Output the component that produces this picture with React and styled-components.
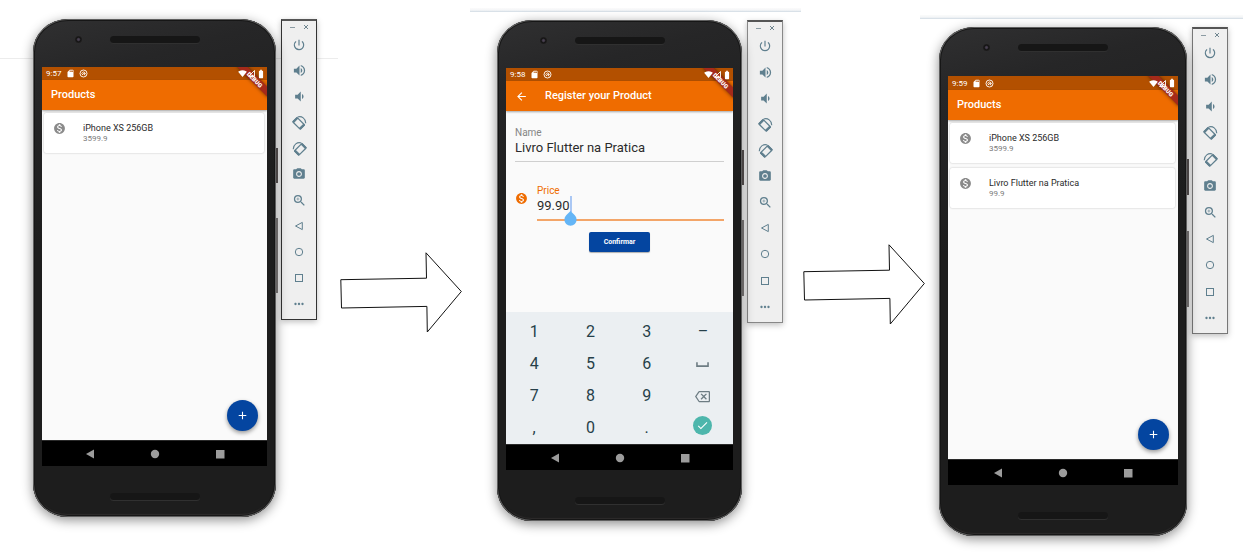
import React from "react";
import styled, { createGlobalStyle, css } from "styled-components";
import {
  MdPowerSettingsNew,
  MdVolumeUp,
  MdVolumeDown,
  MdCameraAlt,
  MdZoomIn,
  MdMoreHoriz,
  MdSdCard,
  MdSignalWifi4Bar,
  MdBatteryFull,
  MdMonetizationOn,
  MdArrowBack,
  MdAdd,
  MdCheck,
  MdOutlineBackspace,
  MdSpaceBar,
} from "react-icons/md";

const GlobalStyle = createGlobalStyle`
  * { box-sizing: border-box; }
  body {
    margin: 0;
    background: #fff;
    font-family: Roboto, "Liberation Sans", sans-serif;
  }
  button, input { font-family: inherit; }
  button { padding: 0; border: 0; background: none; cursor: pointer; }
  svg { display: block; flex: none; }
`;

/* ---------- page ---------- */

const Storyboard = styled.main`
  display: grid;
  grid-template-columns: 340fr minmax(0, 130fr) 333fr minmax(0, 117fr) 325fr;
  align-items: start;
  min-height: 100vh;
`;

const Shot = styled.section`
  position: relative;
  display: flex;
  gap: 5px;
  padding: ${(p) => p.$padding};

  &::before {
    content: "";
    position: absolute;
    z-index: -1;
    left: 0;
    right: 2px;
    top: ${(p) => p.$ruleTop}px;
    height: ${(p) => (p.$plainRule ? 1 : 4)}px;
    background: ${(p) =>
      p.$plainRule ? "#ececec" : "linear-gradient(#fbfbfb 0, #f3f5f7 60%, #d3dce4 75%, #dfe6ec)"};
  }
`;

const StepArrow = styled.svg`
  position: relative;
  z-index: 1;
  width: 122px;
  height: 81px;
  margin-top: ${(p) => p.$top}px;
`;

/* ---------- phone body ---------- */

const PhoneBody = styled.article`
  position: relative;
  flex: 1;
  min-width: 0;
  aspect-ratio: ${(p) => p.$ratio};
  display: flex;
  flex-direction: column;
  padding: 0 9px;
  border-radius: 35px / 33px;
  background: linear-gradient(165deg, #303031 0, #262627 12%, #1d1d1d 40%, #1d1d1d 100%);
  box-shadow:
    inset 0 0 0 1px #606060,
    inset 0 0 0 2px #161616,
    inset 0 -3px 1px #2e2c2c,
    0 3px 12px rgba(0, 0, 0, 0.45);
`;

const SideKey = styled.span`
  position: absolute;
  z-index: -1;
  right: -2px;
  width: 3px;
  top: ${(p) => p.$top}%;
  height: ${(p) => p.$length}%;
  background: ${(p) => p.$tone};
`;

const Bezel = styled.div`
  display: grid;
  grid-template-columns: 1fr 90px 1fr;
  align-items: start;
  flex: none;
  height: ${(p) => p.$height}px;
  padding-top: ${(p) => p.$inset}px;
`;

const Speaker = styled.span`
  grid-column: 2;
  height: 7px;
  border-radius: 4px;
  background:
    radial-gradient(circle, #080808 30%, transparent 50%) 0 0 / 2px 2px,
    #161616;
  box-shadow: 0 1px 0 #303030;
`;

const Lens = styled.span`
  justify-self: end;
  width: 7px;
  height: 7px;
  margin-right: 28px;
  border-radius: 50%;
  background: radial-gradient(circle, #4b4253 15%, #151515 45%, #2a2627);
`;

const Screen = styled.div`
  position: relative;
  flex: 1;
  min-height: 0;
  display: flex;
  flex-direction: column;
  overflow: hidden;
  background: #fafafa;
`;

const StatusBar = styled.div`
  display: flex;
  align-items: center;
  flex: none;
  gap: 4px;
  height: ${(p) => (p.$large ? 14 : 13)}px;
  padding: 0 1px 0 4px;
  background: #b35000;
  color: #fff;
  font-size: 8px;
  line-height: 13px;
`;

const Clock = styled.time`
  margin-right: 1px;
`;

const StatusEnd = styled.span`
  position: relative;
  z-index: 3;
  display: flex;
  align-items: center;
  margin-left: auto;
`;

const DebugRibbon = styled.span`
  position: absolute;
  z-index: 2;
  top: 9px;
  right: -10px;
  width: 44px;
  height: 7px;
  background: #a52a1a;
  box-shadow: 0 0 4px rgba(0, 0, 0, 0.55);
  color: #fff;
  font-size: 6px;
  font-weight: 900;
  line-height: 7px;
  text-align: center;
  transform: rotate(45deg);
`;

const AppBar = styled.header`
  position: relative;
  display: flex;
  align-items: center;
  flex: none;
  gap: 17px;
  height: 30px;
  padding: 0 9px;
  background: #ef6c00;
  box-shadow: 0 1px 2px rgba(0, 0, 0, 0.35);
  color: #fff;
`;

const BarTitle = styled.h1`
  margin: 0;
  font-size: 11px;
  font-weight: 500;
  line-height: 14px;
`;

const BackButton = styled.button`
  display: flex;
  color: #fff;
`;

const NavBar = styled.nav`
  display: flex;
  align-items: center;
  justify-content: center;
  flex: none;
  gap: 55px;
  height: 26px;
  border-top: 1px solid #2a2a2a;
  background: #000;
`;

const NavButton = styled.button`
  display: flex;
`;

/* ---------- product list ---------- */

const ListBody = styled.div`
  position: relative;
  flex: 1;
`;

const ProductList = styled.ul`
  display: flex;
  flex-direction: column;
  gap: 5px;
  margin: 0;
  padding: 3px;
  padding-left: 2px;
  list-style: none;
`;

const ProductCard = styled.li`
  display: flex;
  gap: 17px;
  height: 40px;
  padding: 9px;
  border-radius: 2px;
  background: #fff;
  box-shadow: 0 0 2px rgba(0, 0, 0, 0.25);
  color: #8a8a8a;
`;

const ProductText = styled.div`
  display: flex;
  flex-direction: column;
`;

const ProductName = styled.span`
  color: #2a2a2a;
  font-size: 9px;
  line-height: 12px;
`;

const ProductPrice = styled.span`
  color: #7b7b7b;
  font-size: 8px;
  line-height: 10px;
`;

const AddButton = styled.button`
  position: absolute;
  right: 9px;
  bottom: 9px;
  display: flex;
  align-items: center;
  justify-content: center;
  width: 31px;
  height: 31px;
  border-radius: 50%;
  background: #0445a0;
  box-shadow: 0 2px 4px rgba(0, 0, 0, 0.4);
  color: #fff;
`;

/* ---------- register form ---------- */

const Form = styled.form`
  flex: 1;
  display: flex;
  flex-direction: column;
  padding: 15px 9px 0;
`;

const Field = styled.div`
  position: relative;
  flex: 1;
  min-width: 0;
  display: flex;
  flex-direction: column;
  color: ${(p) => (p.$active ? "#ef6c00" : "#858585")};
  border-bottom: ${(p) => (p.$active ? "2px solid #f3a568" : "1px solid #cfcfcf")};
`;

const FieldLabel = styled.label`
  font-size: 10px;
  line-height: 13px;
`;

const FieldInput = styled.input`
  width: 100%;
  height: 22px;
  padding: 0 0 6px;
  border: 0;
  outline: 0;
  background: none;
  color: #2b2b2b;
  font-size: 13px;
  line-height: 16px;
`;

const FieldRow = styled.div`
  display: flex;
  gap: 9px;
  ${(p) =>
    p.$spaced &&
    css`
      margin: 22px 0 11px;
    `}
`;

const FieldIcon = styled.span`
  padding-top: 8px;
  color: #ef6c00;
`;

const CaretHandle = styled.svg`
  position: absolute;
  left: 27px;
  top: 12px;
`;

const SubmitButton = styled.button`
  align-self: center;
  width: 61px;
  height: 20px;
  border-radius: 2px;
  background: #0445a0;
  box-shadow: 0 1px 1px rgba(0, 0, 0, 0.3);
  color: #fff;
  font-size: 7px;
  font-weight: 700;
`;

const Keypad = styled.div`
  display: grid;
  grid-template-columns: repeat(4, 1fr);
  grid-auto-rows: 32px;
  flex: none;
  padding: 4px 2px 0 0;
  background: #ebeff2;
`;

const Key = styled.button`
  display: flex;
  align-items: center;
  justify-content: center;
  color: ${(p) => (p.$muted ? "#6d7c83" : "#263f49")};
  font-size: 16px;
  line-height: 32px;
`;

const EnterKey = styled(Key)`
  align-self: center;
  justify-self: center;
  width: 19px;
  height: 19px;
  margin-bottom: 6px;
  border-radius: 50%;
  background: #4db6ac;
  color: #fff;
`;

/* ---------- emulator tool strip ---------- */

const StripColumn = styled.aside`
  display: flex;
  flex-direction: column;
  flex: none;
  width: 36px;

  &::after {
    content: "";
    flex: 40;
  }
`;

const Strip = styled.div`
  flex: 60;
  display: flex;
  flex-direction: column;
  padding-bottom: 2px;
  border: 1px solid ${(p) => p.$edge};
  border-top: 2px solid #555;
  background: #efefef;
  box-shadow: 0 2px 6px rgba(0, 0, 0, 0.25);
  color: #5f7f8e;
`;

const WindowKeys = styled.div`
  display: flex;
  align-items: center;
  justify-content: flex-end;
  gap: 8px;
  height: 11px;
  padding: 1px 7px 0 0;
`;

const StripKeys = styled.div`
  flex: 1;
  display: grid;
  grid-auto-rows: 1fr;
`;

const StripKey = styled.button`
  display: flex;
  align-items: center;
  justify-content: center;
  color: inherit;
`;

function RotateIcon({ flipped }) {
  return (
    <svg width="15" height="15" viewBox="0 0 24 24" fill="none" stroke="currentColor" aria-hidden="true">
      <g transform={flipped ? "translate(24 0) scale(-1 1)" : undefined}>
        <g transform="rotate(45 11 13)">
          <rect x="2.500" y="8.500" width="17" height="10" rx="1" strokeWidth="2" />
          <path d="M3.500 8.500v10M18.500 8.500v10" strokeWidth="3.600" />
        </g>
        <path d="M9 3.200c6.500-2.200 13 2.600 13 9.800" strokeWidth="1.800" />
      </g>
    </svg>
  );
}

function ShapeIcon({ shape }) {
  return (
    <svg width="10" height="10" viewBox="0 0 10 10" fill="none" stroke="currentColor" aria-hidden="true">
      {shape === "triangle" && <path d="M8.300 1.400v7.200L1.500 5z" strokeLinejoin="round" />}
      {shape === "circle" && <circle cx="5" cy="5" r="3.700" />}
      {shape === "square" && <rect x="1.500" y="1.500" width="7" height="7" />}
    </svg>
  );
}

const stripItems = [
  ["Power", <MdPowerSettingsNew size={14} />],
  ["Volume up", <MdVolumeUp size={15} />],
  ["Volume down", <MdVolumeDown size={15} />],
  ["Rotate left", <RotateIcon />],
  ["Rotate right", <RotateIcon flipped />],
  ["Take screenshot", <MdCameraAlt size={14} />],
  ["Zoom", <MdZoomIn size={15} />],
  ["Back", <ShapeIcon shape="triangle" />],
  ["Home", <ShapeIcon shape="circle" />],
  ["Overview", <ShapeIcon shape="square" />],
  ["More", <MdMoreHoriz size={14} />],
];

function ToolStrip({ edge }) {
  return (
    <StripColumn>
      <Strip $edge={edge}>
        <WindowKeys>
          <StripKey aria-label="Minimize">
            <svg width="6" height="6" viewBox="0 0 6 6" stroke="#8b9ba3">
              <path d="M1 3.500h5" />
            </svg>
          </StripKey>
          <StripKey aria-label="Close">
            <svg width="6" height="6" viewBox="0 0 6 6" stroke="#6f858f">
              <path d="M1 1l4 4M5 1L1 5" />
            </svg>
          </StripKey>
        </WindowKeys>
        <StripKeys>
          {stripItems.map(([name, icon]) => (
            <StripKey key={name} aria-label={name}>
              {icon}
            </StripKey>
          ))}
        </StripKeys>
      </Strip>
    </StripColumn>
  );
}

function SystemStatus({ time, large }) {
  return (
    <StatusBar $large={large}>
      <Clock>{time}</Clock>
      <MdSdCard size={9} />
      <svg width="9" height="9" viewBox="0 0 18 18" fill="none" stroke="#fff" strokeWidth="1.800">
        <circle cx="9" cy="9" r="7" />
        <path d="M5 9.500l4-4 4 3.500-4 .5 3.500 3M6 12l3-3" />
      </svg>
      <StatusEnd>
        <MdSignalWifi4Bar size={9} />
        <svg width="9" height="9" viewBox="0 0 18 18" fill="none" stroke="#fff" strokeWidth="1.800">
          <path d="M15 3v12H3z" />
        </svg>
        <MdBatteryFull size={10} />
      </StatusEnd>
    </StatusBar>
  );
}

function Phone({ ratio, time, title, back, large, children }) {
  return (
    <PhoneBody $ratio={ratio}>
      <SideKey $top={26} $length={7} $tone="#5d5757" />
      <SideKey $top={40} $length={15} $tone="#858282" />
      <Bezel $height={large ? 49 : 48} $inset={17}>
        <Lens />
        <Speaker />
      </Bezel>
      <Screen>
        <SystemStatus time={time} large={large} />
        <DebugRibbon>DEBUG</DebugRibbon>
        <AppBar>
          {back && (
            <BackButton aria-label="Back">
              <MdArrowBack size={13} />
            </BackButton>
          )}
          <BarTitle>{title}</BarTitle>
        </AppBar>
        {children}
        <NavBar>
          <NavButton aria-label="Back">
            <svg width="10" height="10" viewBox="0 0 10 10" fill="#9c9c9c">
              <path d="M9 .5v9L1 5z" />
            </svg>
          </NavButton>
          <NavButton aria-label="Home">
            <svg width="10" height="10" viewBox="0 0 10 10" fill="#9c9c9c">
              <circle cx="5" cy="5" r="4.200" />
            </svg>
          </NavButton>
          <NavButton aria-label="Overview">
            <svg width="10" height="10" viewBox="0 0 10 10" fill="#9c9c9c">
              <rect x="1" y="1" width="8.500" height="8.500" />
            </svg>
          </NavButton>
        </NavBar>
      </Screen>
      <Bezel $height={51} $inset={27}>
        <Speaker />
      </Bezel>
    </PhoneBody>
  );
}

function Products({ items }) {
  return (
    <ListBody>
      <ProductList>
        {items.map((item) => (
          <ProductCard key={item.name}>
            <MdMonetizationOn size={13} />
            <ProductText>
              <ProductName>{item.name}</ProductName>
              <ProductPrice>{item.price}</ProductPrice>
            </ProductText>
          </ProductCard>
        ))}
      </ProductList>
      <AddButton aria-label="Add product">
        <MdAdd size={13} />
      </AddButton>
    </ListBody>
  );
}

const keys = ["1", "2", "3", "–", "4", "5", "6", "space", "7", "8", "9", "delete", ",", "0", ".", "enter"];

function NumberKey({ value }) {
  if (value === "space")
    return (
      <Key $muted aria-label="Space">
        <MdSpaceBar size={19} />
      </Key>
    );
  if (value === "delete")
    return (
      <Key $muted aria-label="Delete">
        <MdOutlineBackspace size={15} />
      </Key>
    );
  if (value === "enter")
    return (
      <EnterKey aria-label="Done">
        <MdCheck size={13} />
      </EnterKey>
    );
  return <Key>{value}</Key>;
}

function RegisterForm() {
  return (
    <>
      <Form onSubmit={(e) => e.preventDefault()}>
        <FieldRow>
          <Field>
            <FieldLabel htmlFor="name">Name</FieldLabel>
            <FieldInput id="name" defaultValue="Livro Flutter na Pratica" />
          </Field>
        </FieldRow>
        <FieldRow $spaced>
          <FieldIcon>
            <MdMonetizationOn size={13} />
          </FieldIcon>
          <Field $active>
            <FieldLabel htmlFor="price">Price</FieldLabel>
            <FieldInput id="price" defaultValue="99.90" />
            <CaretHandle width="13" height="30" viewBox="0 0 13 30">
              <path d="M7 0v16" stroke="#5b95ee" />
              <path d="M6.500 15l4.300 4.300a6.100 6.100 0 1 1-8.600 0z" fill="#64b5f6" />
            </CaretHandle>
          </Field>
        </FieldRow>
        <SubmitButton>Confirmar</SubmitButton>
      </Form>
      <Keypad>
        {keys.map((k) => (
          <NumberKey key={k} value={k} />
        ))}
      </Keypad>
    </>
  );
}

function Arrow({ top }) {
  return (
    <StepArrow $top={top} viewBox="0 0 122 81" fill="#fff" stroke="#111" aria-hidden="true">
      <path d="M.8 27.700L86.500 26.200L86 .8L121.300 39.500L87.300 80L86.900 54.400L1.500 56z" />
    </StepArrow>
  );
}

const iphone = { name: "iPhone XS 256GB", price: "3599.9" };
const book = { name: "Livro Flutter na Pratica", price: "99.9" };

export default function App() {
  return (
    <>
      <GlobalStyle />
      <Storyboard>
        <Shot $padding="19px 23px 0 33px" $ruleTop={58} $plainRule>
          <Phone ratio="243 / 498" time="9:57" title="Products">
            <Products items={[iphone]} />
          </Phone>
          <ToolStrip edge="#333" />
        </Shot>
        <Arrow top={252} />
        <Shot $padding="20px 20px 0 27px" $ruleTop={8}>
          <Phone ratio="245 / 501" time="9:58" title="Register your Product" back>
            <RegisterForm />
          </Phone>
          <ToolStrip edge="#888" />
        </Shot>
        <Arrow top={244} />
        <Shot $padding="27px 17px 0 19px" $ruleTop={15}>
          <Phone ratio="248 / 509" time="9:59" title="Products" large>
            <Products items={[iphone, book]} />
          </Phone>
          <ToolStrip edge="#777" />
        </Shot>
      </Storyboard>
    </>
  );
}
